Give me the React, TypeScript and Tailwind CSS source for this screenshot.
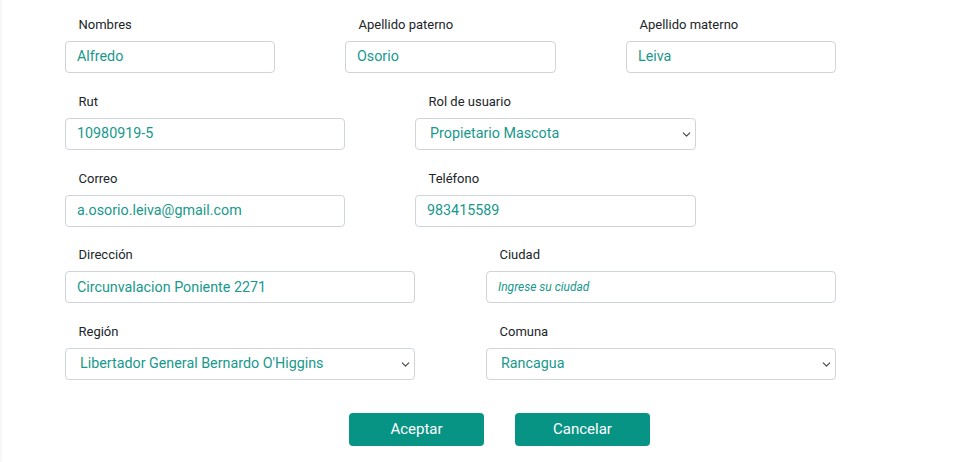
import { ChevronDown } from "lucide-react";

type FieldProps = {
  label: string;
  value?: string;
  placeholder?: string;
  width: string;
  select?: boolean;
};

function Field({ label, value, placeholder, width, select }: FieldProps) {
  return (
    <div className={`flex flex-col ${width}`}>
      <label className="pl-[13.5px] text-[13px] leading-[16px] text-[#212529] mb-[8px]">{label}</label>
      <div className="relative h-[32px] rounded-[4px] border border-[#ced4da] bg-white flex items-center">
        {value ? (
          <span className={`${select ? "pl-[14px]" : "pl-[11px]"} text-[14.3px] text-[#17998c] whitespace-nowrap`}>{value}</span>
        ) : (
          <span className="pl-[11px] text-[12px] italic text-[#17998c]">{placeholder}</span>
        )}
        {select && (
          <ChevronDown className="absolute right-[2px] top-[9px] w-[13px] h-[13px] text-[#4a4a4a]" strokeWidth={2.2} />
        )}
      </div>
    </div>
  );
}

export default function App() {
  return (
    <div
      className="w-[955px] h-[462px] bg-white shadow-[inset_3px_0_3px_-2px_rgba(0,0,0,0.06)] overflow-hidden"
      style={{ fontFamily: "Roboto, 'Noto Sans', sans-serif" }}
    >
      <div className="pl-[65px] pt-[17px] flex flex-col gap-[20.75px]">
        <div className="flex gap-[70px]">
          <Field label="Nombres" value="Alfredo" width="w-[210px]" />
          <Field label="Apellido paterno" value="Osorio" width="w-[211px]" />
          <Field label="Apellido materno" value="Leiva" width="w-[210px]" />
        </div>
        <div className="flex gap-[70px]">
          <Field label="Rut" value="10980919-5" width="w-[280px]" />
          <Field label="Rol de usuario" value="Propietario Mascota" width="w-[281px]" select />
        </div>
        <div className="flex gap-[70px]">
          <Field label="Correo" value="a.osorio.leiva@gmail.com" width="w-[280px]" />
          <Field label="Teléfono" value="983415589" width="w-[281px]" />
        </div>
        <div className="flex gap-[71px]">
          <Field label="Dirección" value="Circunvalacion Poniente 2271" width="w-[350px]" />
          <Field label="Ciudad" placeholder="Ingrese su ciudad" width="w-[350px]" />
        </div>
        <div className="flex gap-[71px]">
          <Field label="Región" value="Libertador General Bernardo O'Higgins" width="w-[350px]" select />
          <Field label="Comuna" value="Rancagua" width="w-[350px]" select />
        </div>
      </div>
      <div className="flex gap-[31px] pl-[349px] mt-[33px]">
        <button className="w-[135px] h-[33px] rounded-[4px] bg-[#079484] text-white text-[15px]">Aceptar</button>
        <button className="w-[135px] h-[33px] rounded-[4px] bg-[#079484] text-white text-[15px]">Cancelar</button>
      </div>
    </div>
  );
}
